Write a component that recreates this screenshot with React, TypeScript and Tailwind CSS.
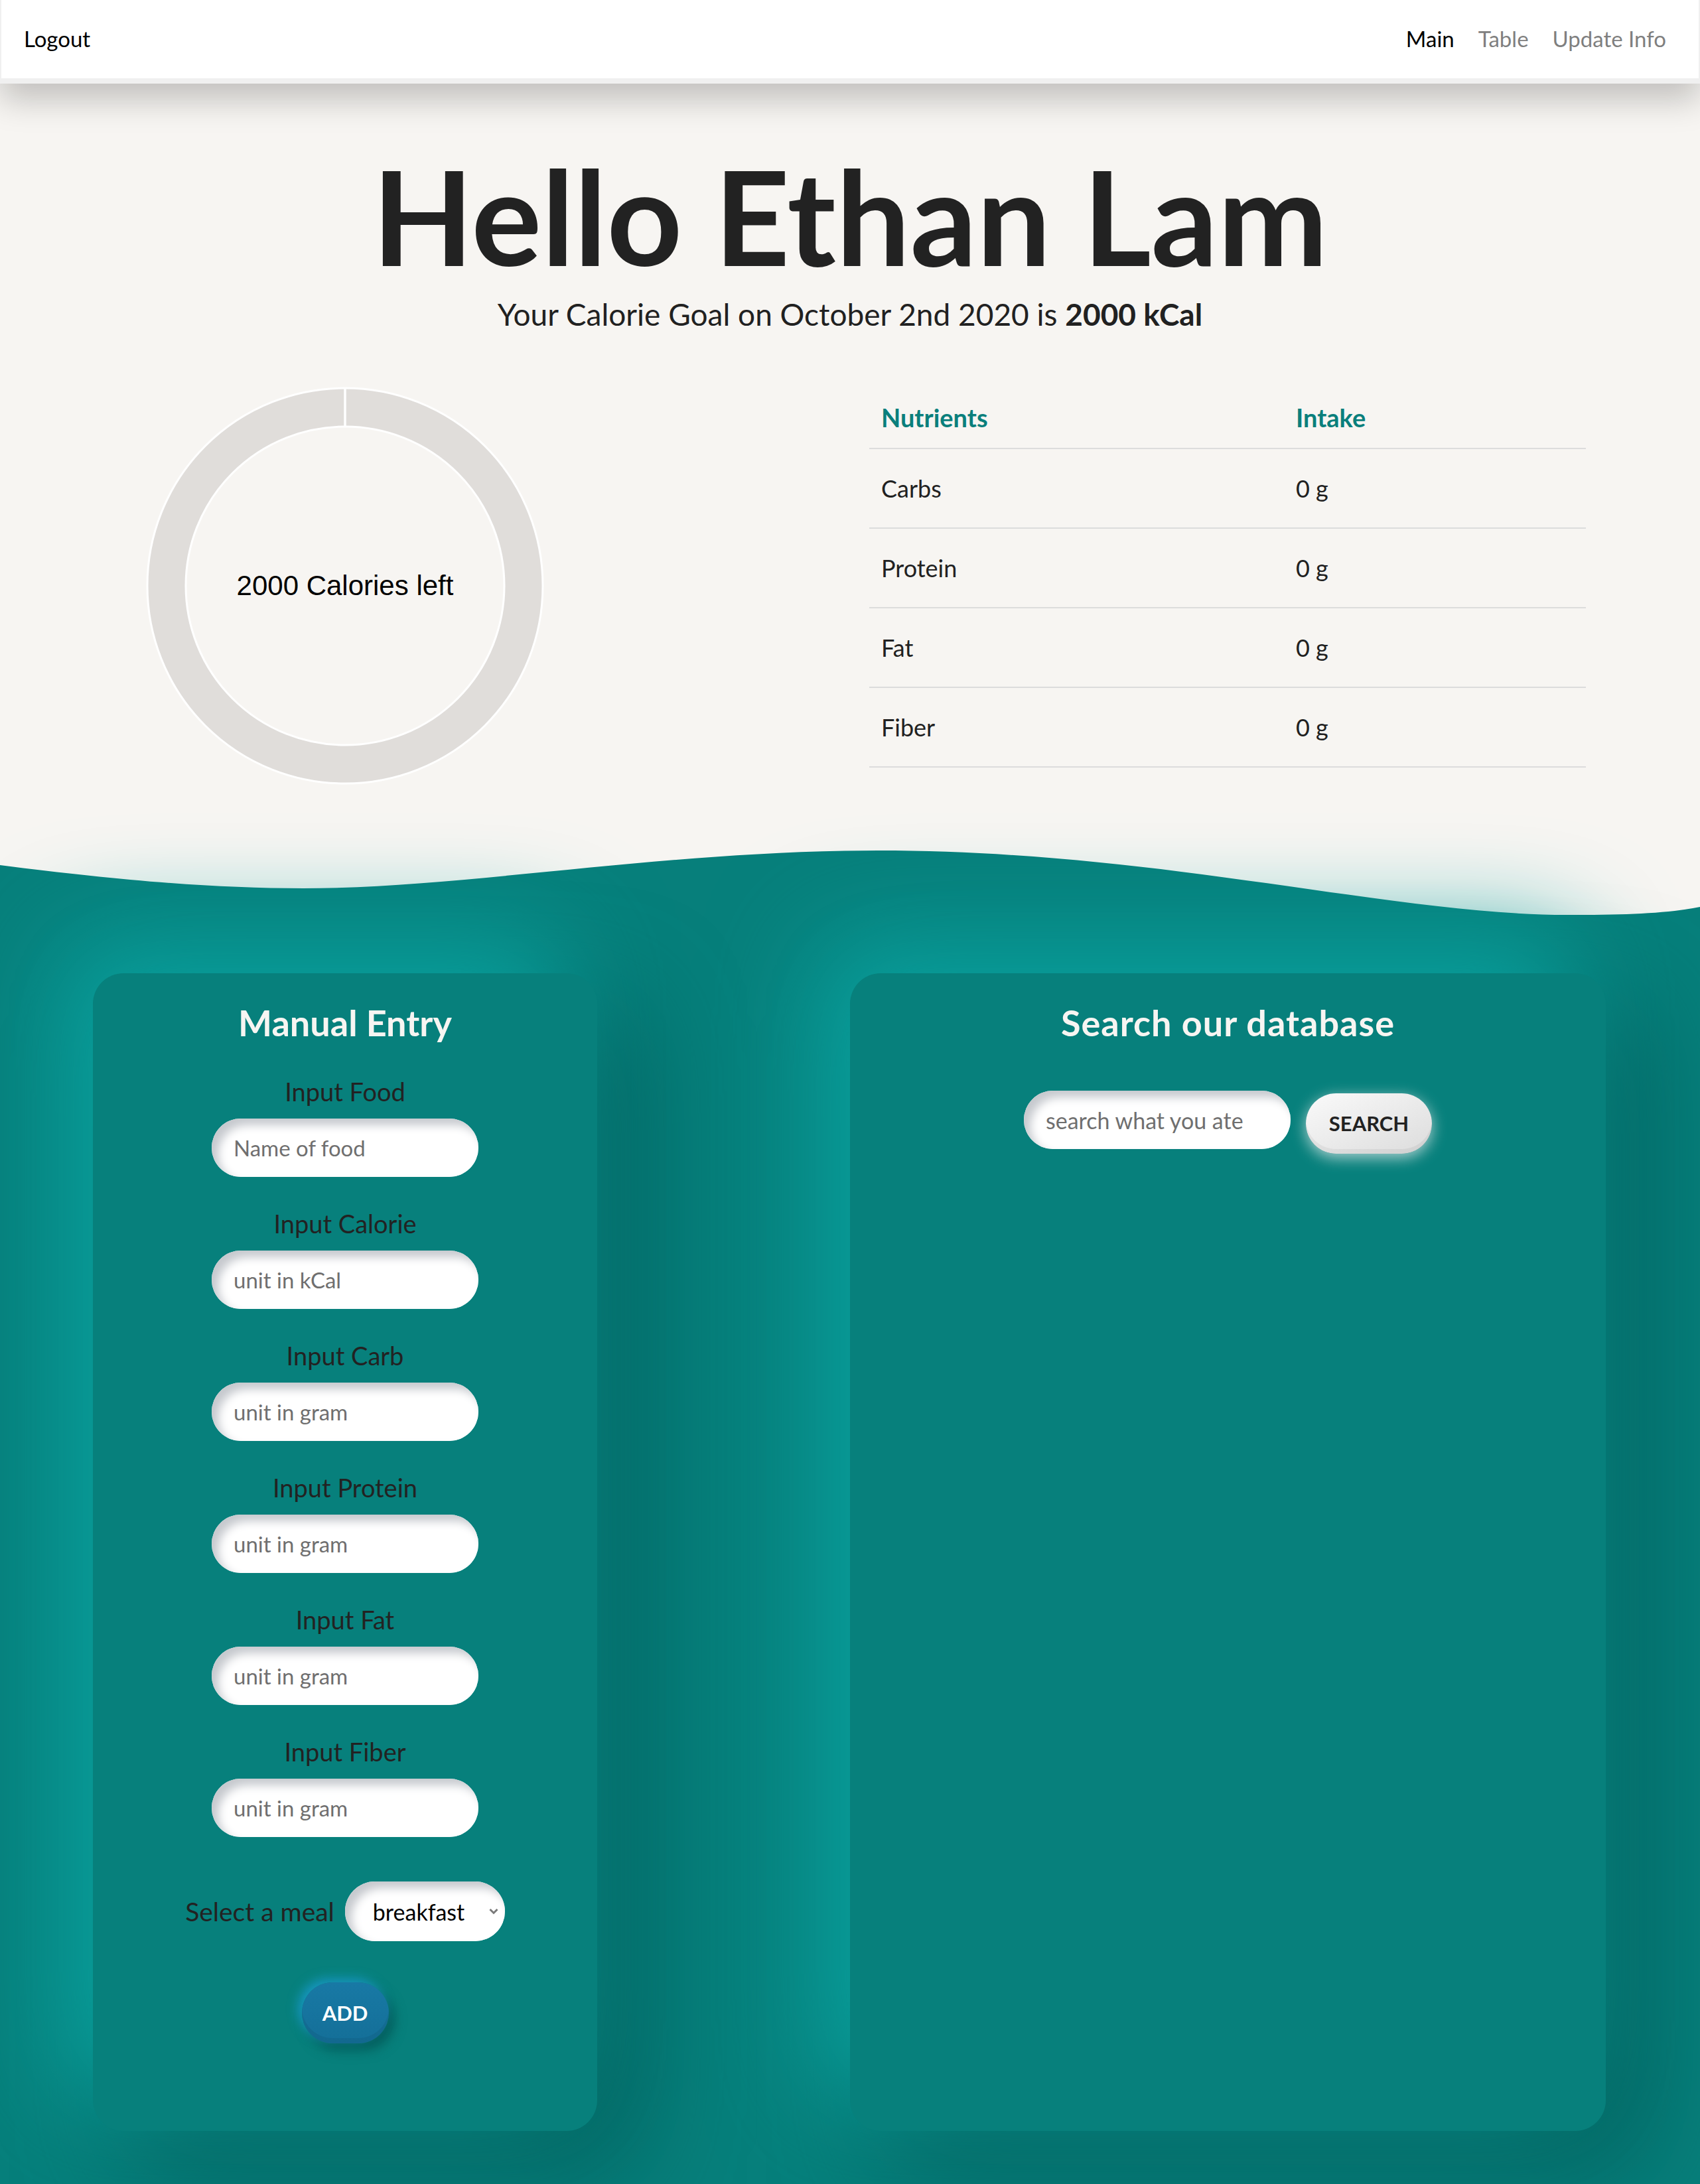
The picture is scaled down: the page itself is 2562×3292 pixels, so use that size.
import React from "react";

const fields: [string, string][] = [
  ["Input Food", "Name of food"],
  ["Input Calorie", "unit in kCal"],
  ["Input Carb", "unit in gram"],
  ["Input Protein", "unit in gram"],
  ["Input Fat", "unit in gram"],
  ["Input Fiber", "unit in gram"],
];

const nutrients = ["Carbs", "Protein", "Fat", "Fiber"];

function Donut() {
  return (
    <div className="grid h-[600px] w-[600px] place-items-center">
      <svg viewBox="0 0 600 600" className="col-start-1 row-start-1 h-[600px] w-[600px]">
        <circle cx="300" cy="300" r="269" fill="none" stroke="#e0ddda" strokeWidth="58" />
        <circle cx="300" cy="300" r="298" fill="none" stroke="#ffffff" strokeWidth="3" />
        <circle cx="300" cy="300" r="240" fill="none" stroke="#ffffff" strokeWidth="3" />
        <line x1="300" y1="1" x2="300" y2="61" stroke="#ffffff" strokeWidth="3.5" />
      </svg>
      <div className="col-start-1 row-start-1 font-['Liberation_Sans',Arial,sans-serif] text-[42px] leading-none text-black">
        2000 Calories left
      </div>
    </div>
  );
}

function NutrientTable() {
  return (
    <div className="w-[1080px] text-[36px] text-[#212121]">
      <div className="flex h-[94px] items-center border-b-2 border-[#dcdcdc] text-[38px] font-bold text-[#0a7f7c]">
        <div className="w-[625px] pl-[18px]">Nutrients</div>
        <div className="pl-[18px]">Intake</div>
      </div>
      {nutrients.map((n) => (
        <div key={n} className="flex h-[120px] items-center border-b-2 border-[#dcdcdc]">
          <div className="w-[625px] pl-[18px]">{n}</div>
          <div className="pl-[18px]">0 g</div>
        </div>
      ))}
    </div>
  );
}

const cardCls =
  "relative h-[1745px] rounded-[46px] bg-[#07807c] shadow-[-50px_-50px_160px_#0aa3a0,50px_50px_160px_#045d5a]";

const inputCls =
  "h-[88px] w-[402px] rounded-full bg-white pl-[33px] text-[33px] text-[#212121] outline-none placeholder:text-[#6f6f6f] shadow-[inset_10px_10px_14px_#c6c9ce,inset_-4px_-4px_8px_#ffffff]";

export default function App() {
  return (
    <div className="min-h-[3292px] w-full bg-[#f7f5f2] font-[Lato,sans-serif] text-[#212121]">
      {/* Navbar */}
      <nav className="relative z-10 flex h-[126px] items-center justify-between border-x-2 border-b-8 border-[#f0f0f0] bg-white pl-[34px] pr-[49px] text-[33px] shadow-[0_24px_50px_rgba(0,0,0,0.22)]">
        <span className="text-black">Logout</span>
        <div className="flex gap-[36px]">
          <span className="text-black">Main</span>
          <span className="text-[#7f7f7f]">Table</span>
          <span className="text-[#7f7f7f]">Update Info</span>
        </div>
      </nav>

      {/* Hero */}
      <section className="flex flex-col items-center pb-[99px]">
        <h1 className="mt-[100px] h-[198px] text-[198px] font-bold leading-none text-[#222222]">
          Hello Ethan Lam
        </h1>
        <p className="mt-[22px] text-[46px] leading-[55px] text-[#212121]">
          Your Calorie Goal on October 2nd 2020 is <span className="font-bold">2000 kCal</span>
        </p>
        <div className="mt-[82px] flex h-[600px] w-full pl-[220px]">
          <Donut />
          <div className="ml-[490px]">
            <NutrientTable />
          </div>
        </div>
      </section>

      {/* Teal area */}
      <div>
        <svg viewBox="0 0 2562 98" preserveAspectRatio="none" className="block h-[98px] w-full">
          <path
            d="M0,22 C180,45 320,57 457,57 C700,57 1000,0 1323,0 C1750,0 2100,97 2361,97 C2450,97 2510,95 2562,85 L2562,98 L0,98 Z"
            fill="#077f7b"
          />
        </svg>
        <div className="-mt-px flex bg-[#077f7b] pb-[80px] pl-[140px] pt-[88px]">
          {/* Manual entry */}
          <div className={`${cardCls} flex w-[760px] flex-col items-center pt-[43px]`}>
            <h2 className="text-[54px] font-bold leading-[64px] text-[#f7f5f2]">Manual Entry</h2>
            <div className="mt-[49px] flex flex-col items-center gap-[48px]">
              {fields.map(([label, ph]) => (
                <div key={label} className="flex flex-col items-center">
                  <label className="text-[38px] leading-[44px] text-[#222222]">{label}</label>
                  <input className={`${inputCls} mt-[19px]`} placeholder={ph} />
                </div>
              ))}
            </div>
            <div className="mt-[67px] flex items-center gap-[16px]">
              <span className="text-[39px] leading-[44px] text-[#222222]">Select a meal</span>
              <div className="flex h-[90px] w-[241px] items-center justify-between rounded-full bg-white pl-[42px] pr-[10px] text-[34px] text-black shadow-[inset_10px_10px_14px_#c6c9ce,inset_-4px_-4px_8px_#ffffff]">
                <span>breakfast</span>
                <svg width="14" height="10" viewBox="0 0 14 10">
                  <path d="M1.5 2 L7 7.5 L12.5 2" fill="none" stroke="#7a7a7a" strokeWidth="3" />
                </svg>
              </div>
            </div>
            <button className="mt-[62px] flex h-[92px] w-[131px] items-center justify-center rounded-[46px] bg-gradient-to-b from-[#1879a5] to-[#146f98] text-[31px] font-bold text-white shadow-[-6px_-6px_16px_rgba(30,160,220,0.7),8px_10px_18px_rgba(3,70,70,0.6),inset_0_-8px_0_rgba(0,0,0,0.06)]">
              ADD
            </button>
          </div>

          {/* Search */}
          <div className={`${cardCls} ml-[381px] flex w-[1139px] flex-col items-center pt-[43px]`}>
            <h2 className="text-[54px] font-bold leading-[64px] tracking-[1px] text-[#f7f5f2]">Search our database</h2>
            <div className="mt-[70px] flex items-start gap-[23px]">
              <input className={`${inputCls} w-[401px] text-[34px]`} placeholder="search what you ate" />
              <button className="mt-[4px] flex h-[91px] w-[190px] items-center justify-center rounded-[46px] bg-gradient-to-br from-[#fafafa] to-[#dcdcdc] text-[31px] font-bold text-[#222222] shadow-[0_6px_22px_rgba(225,235,235,0.75),inset_0_-7px_0_rgba(0,0,0,0.05)]">
                SEARCH
              </button>
            </div>
          </div>
        </div>
      </div>
    </div>
  );
}
